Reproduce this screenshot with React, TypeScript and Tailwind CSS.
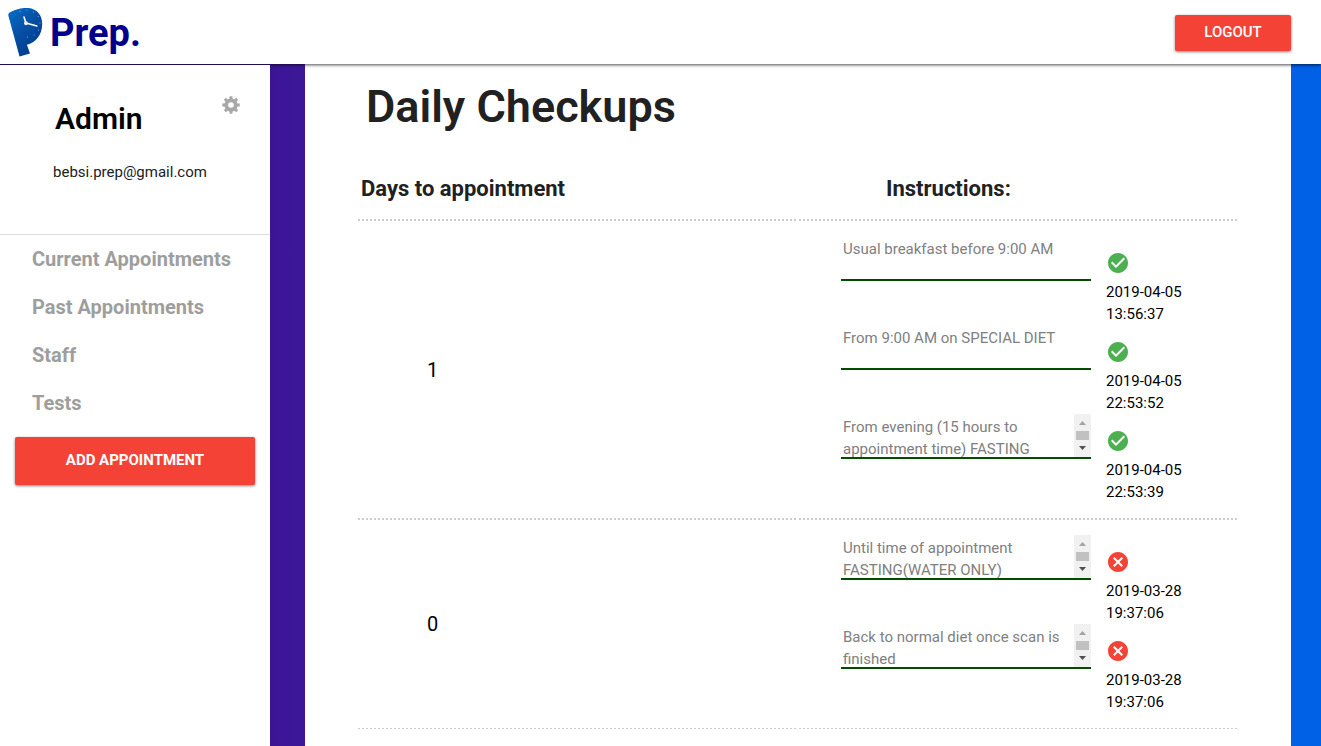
import React from "react";
import { MdCancel, MdCheckCircle } from "react-icons/md";

type Step = { text: string; scroll: boolean; done: boolean; date: string; time: string };
type Day = { days: number; steps: Step[] };

const schedule: Day[] = [
  {
    days: 1,
    steps: [
      { text: "Usual breakfast before 9:00 AM", scroll: false, done: true, date: "2019-04-05", time: "13:56:37" },
      { text: "From 9:00 AM on SPECIAL DIET", scroll: false, done: true, date: "2019-04-05", time: "22:53:52" },
      { text: "From evening (15 hours to appointment time) FASTING", scroll: true, done: true, date: "2019-04-05", time: "22:53:39" },
    ],
  },
  {
    days: 0,
    steps: [
      { text: "Until time of appointment FASTING(WATER ONLY)", scroll: true, done: false, date: "2019-03-28", time: "19:37:06" },
      { text: "Back to normal diet once scan is finished", scroll: true, done: false, date: "2019-03-28", time: "19:37:06" },
    ],
  },
];

const navItems = ["Current Appointments", "Past Appointments", "Staff", "Tests"];

// One-pixel rules of two-pixel dots along the cell edges.
const ruleBottom =
  "bg-[repeating-linear-gradient(90deg,transparent_0_2px,#cccccc_2px_4px)] bg-[length:100%_1px] bg-bottom bg-no-repeat";
const ruleBoth =
  "bg-[image:repeating-linear-gradient(90deg,transparent_0_2px,#cccccc_2px_4px),repeating-linear-gradient(90deg,transparent_0_2px,#cccccc_2px_4px)] bg-[length:100%_1px] bg-[position:top,bottom] bg-no-repeat";

const toothAngles = [0, 45, 90, 135, 180, 225, 270, 315];

function Gear() {
  return (
    <svg viewBox="0 0 18 18" className="size-[18px]" aria-hidden="true">
      <circle cx="9" cy="9" r="4.700" fill="none" stroke="#a8a8a8" strokeWidth="3.800" />
      <g fill="#a8a8a8">
        {toothAngles.map((angle) => (
          <path key={angle} d="M7.300 3.500 L7.600 0.300 H10.400 L10.700 3.500 Z" transform={`rotate(${angle} 9 9)`} />
        ))}
      </g>
    </svg>
  );
}

function Logo() {
  return (
    <svg viewBox="0 1 36 50" className="h-[50px] w-9" aria-hidden="true">
      <defs>
        <linearGradient id="logo-fill" x1="0" y1="0" x2="0.7" y2="1">
          <stop offset="0" stopColor="#0a6fca" />
          <stop offset="0.5" stopColor="#0450a4" />
          <stop offset="1" stopColor="#023a8c" />
        </linearGradient>
      </defs>
      <path
        d="M0.300 8.500 Q0 6.300 2 5.300 Q9 1.200 18 0.900 C28 0.700 34.300 7.500 34.200 17 C34.100 28 27.500 36 18.900 37.800 L22 46.500 L11.500 49.500 Z"
        fill="url(#logo-fill)"
      />
      <path d="M18 16.300 L16 10" stroke="#fff" strokeWidth="1.600" strokeLinecap="round" />
      <path d="M18 16 L28.800 19" stroke="#fff" strokeWidth="1.600" strokeLinecap="round" />
      <circle cx="18" cy="16.300" r="2" fill="#e8eef6" />
      <g fill="#8fa9c8">
        <circle cx="12" cy="4.200" r="0.600" />
        <circle cx="19" cy="3" r="0.600" />
        <circle cx="25.500" cy="5" r="0.600" />
        <circle cx="30.200" cy="9.500" r="0.600" />
        <circle cx="32" cy="16" r="0.600" />
        <circle cx="30.500" cy="23" r="0.600" />
        <circle cx="26" cy="28" r="0.600" />
        <circle cx="19.500" cy="30" r="0.600" />
      </g>
    </svg>
  );
}

function ScrollTrack() {
  return (
    <div className="flex w-[17px] flex-none flex-col items-center justify-between bg-[#f1f1f1] py-[7px]" aria-hidden="true">
      <svg viewBox="0 0 7 4" className="h-1 w-[7px]"><path d="M0 4 L3.5 0 L7 4 Z" fill="#a3a3a3" /></svg>
      <div className="h-[9px] w-[13px] bg-[#c1c1c1]" />
      <svg viewBox="0 0 7 4" className="h-1 w-[7px]"><path d="M0 0 L3.5 4 L7 0 Z" fill="#505050" /></svg>
    </div>
  );
}

function StepRow({ step }: { step: Step }) {
  return (
    <div className="flex h-[89px] gap-[15px]">
      <div className="flex h-[45px] w-[250px] border-b-2 border-[#004d00]">
        <textarea
          readOnly
          aria-label={step.text}
          defaultValue={step.text}
          className="block h-full min-w-0 flex-1 resize-none overflow-hidden bg-transparent p-0.5 text-[15px] leading-[22px] text-[#808080] outline-none"
        />
        {step.scroll && <ScrollTrack />}
      </div>
      <div className="text-[15px] leading-[22px] text-black">
        <div className="flex h-[45px] items-end pb-1.5">
          {step.done ? (
            <MdCheckCircle className="size-6 text-[#4caf50]" title="Done" />
          ) : (
            <MdCancel className="size-6 text-[#f44336]" title="Not done" />
          )}
        </div>
        <div>{step.date}</div>
        <div>{step.time}</div>
      </div>
    </div>
  );
}

export default function App() {
  return (
    <div className="flex h-screen flex-col overflow-hidden bg-white font-[Roboto,sans-serif]">
      <header className="relative z-10 flex h-16 flex-none items-center justify-between bg-white pt-0.5 pr-[30px] pl-2 shadow-[0_1px_3px_rgba(0,0,0,0.7)]">
        <a href="#home" className="flex items-center gap-1.5">
          <Logo />
          <span className="text-[38px] leading-[50px] font-bold text-[#00008b]">Prep.</span>
        </a>
        <button className="h-9 w-[116px] rounded-xs bg-[#f44336] pb-0.5 text-[15px] font-medium text-white shadow-[0_1px_3px_rgba(0,0,0,0.5)]">
          LOGOUT
        </button>
      </header>

      <div className="flex min-h-0 flex-1 bg-linear-to-r from-[#3c1496] from-20% to-[#0060e6] to-98%">
        <aside className="relative z-20 mt-px w-[270px] flex-none bg-white">
          <div className="flex h-[170px] justify-between border-b border-[#dcdcdc] pr-[30px] pl-[53px]">
            <div className="pt-8">
              <h2 className="pl-0.5 text-[30px] leading-[44px] font-semibold text-black">Admin</h2>
              <p className="pt-5 text-[15px] leading-[22px] text-[#212121]">bebsi.prep@gmail.com</p>
            </div>
            <button aria-label="Settings" className="-ml-8 mt-[31px] self-start">
              <Gear />
            </button>
          </div>
          <nav className="flex flex-col">
            {navItems.map((item) => (
              <a key={item} href="#nav" className="pl-8 text-[20px] leading-[48px] font-bold text-[#9e9e9e]">
                {item}
              </a>
            ))}
          </nav>
          <div className="px-[15px] pt-[10px]">
            <button className="h-12 w-full rounded-xs bg-[#f44336] pb-0.5 text-[15px] font-bold text-white shadow-[0_1px_3px_rgba(0,0,0,0.5)]">
              ADD APPOINTMENT
            </button>
          </div>
        </aside>

        <main className="mr-[30px] ml-[35px] min-w-0 flex-1 overflow-hidden bg-white pr-[53px] pl-[51px]">
          <h1 className="pt-4 pl-2.5 text-[45px] leading-[54px] font-semibold text-[#212121]">Daily Checkups</h1>
          <table className="mt-[21px] w-full table-fixed border-separate border-spacing-0">
            <thead>
              <tr className="text-left text-[22px] leading-[32px] text-[#212121]">
                <th className={`h-[65px] px-[5px] pt-0.5 font-bold ${ruleBottom}`}>Days to appointment</th>
                <th className={`h-[65px] pt-0.5 pl-[89px] font-bold ${ruleBottom}`}>Instructions:</th>
              </tr>
            </thead>
            <tbody>
              {schedule.map((day) => (
                <tr key={day.days}>
                  <td className={`pl-[71px] align-middle text-[20px] leading-[30px] text-black ${ruleBoth}`}>
                    {day.days}
                  </td>
                  <td className={`py-4 pl-11 ${ruleBoth}`}>
                    {day.steps.map((step) => (
                      <StepRow key={step.text} step={step} />
                    ))}
                  </td>
                </tr>
              ))}
            </tbody>
          </table>
        </main>
      </div>
    </div>
  );
}
